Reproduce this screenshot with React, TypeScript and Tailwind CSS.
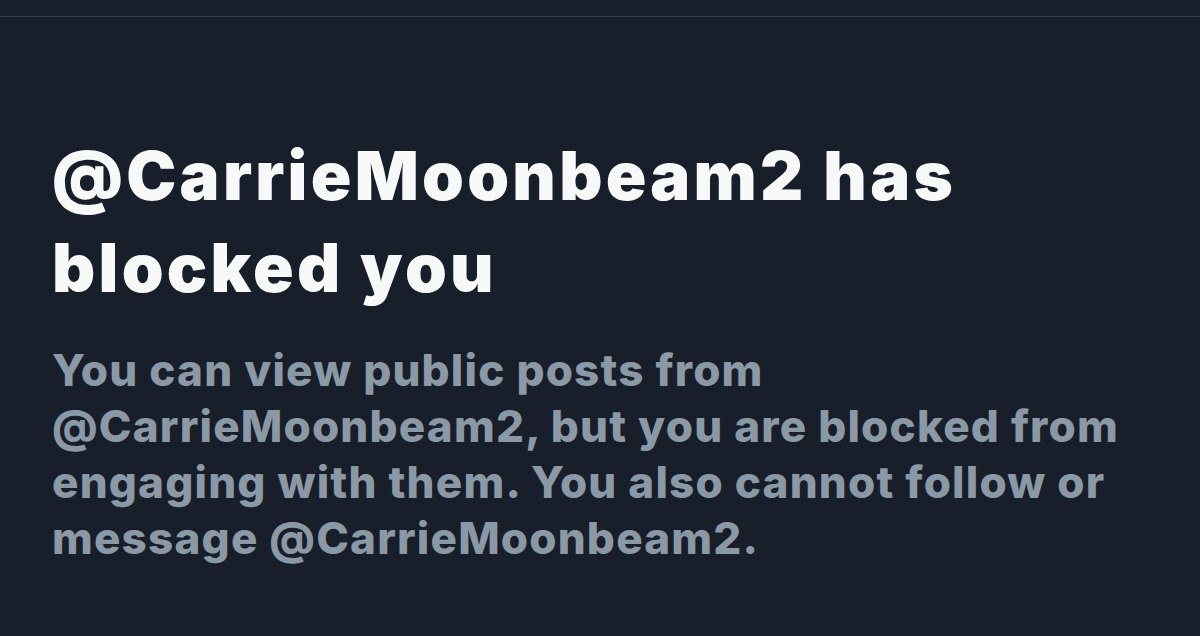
export default function App() {
  const handle = '@CarrieMoonbeam2'
  return (
    <div className="h-[636px] w-[1200px] overflow-hidden bg-[#181f2a] font-['Inter',sans-serif]">
      <div className="h-4" />
      <div className="h-px bg-[#3a414d]" />
      <div className="px-[52px] pt-[113px]">
        <h1 className="text-[67px] font-black leading-[92px] tracking-[3.3px] text-[#f7f9f9]">
          {handle} has
          <br />
          blocked you
        </h1>
        <p className="mt-[28px] w-[1148px] text-[44px] font-extrabold leading-[56px] tracking-[1.2px] text-[#8b98a5]">
          You can view public posts from
          <br />
          {handle}, but you are blocked from
          <br />
          engaging with them. You also cannot follow or
          <br />
          message {handle}.
        </p>
      </div>
    </div>
  )
}
